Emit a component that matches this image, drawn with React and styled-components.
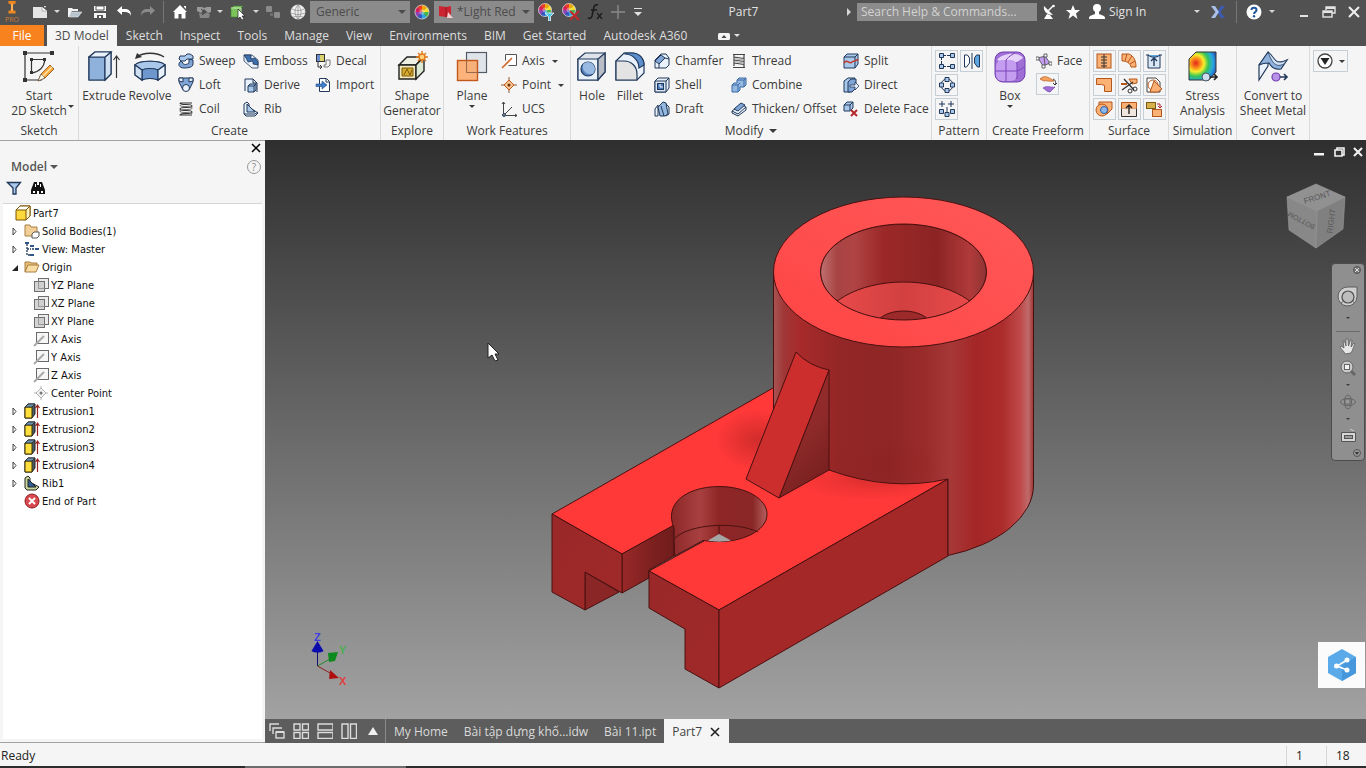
import React from "react";
import styled, { createGlobalStyle, css } from "styled-components";

const UI = '"Open Sans", "Noto Sans", sans-serif';
const TREE = '"DejaVu Sans Condensed", "DejaVu Sans", sans-serif';

const GlobalStyle = createGlobalStyle`
  * { box-sizing: border-box; }
  body { margin: 0; background: #f5f5f5; font-family: ${UI}; font-size: 12px; line-height: 16px; color: #3b3b3b; }
  button, select, input { font: inherit; color: inherit; margin: 0; padding: 0; border: 0; background: none; border-radius: 0; }
  button { cursor: pointer; white-space: nowrap; }
  ul { list-style: none; margin: 0; padding: 0; }
  svg { display: block; flex: none; }
`;

/* ---------- icons ---------- */

const N = "#21385a";
const B = "#a9c8ea";
const W = "#e9f1fa";
const O = "#fbb173";
const OD = "#b5561c";

const Wheel = ({ cx = 8, cy = 8, r = 7 }) => {
  const colors = ["#f6a400", "#f4e02b", "#45b649", "#2fa8dc", "#3256c4", "#9440b8", "#d81e5b", "#ee3b24"];
  return (
    <g>
      {colors.map((c, i) => {
        const a = (i * Math.PI) / 4 - Math.PI / 2;
        const b = a + Math.PI / 4;
        return (
          <path
            key={c}
            fill={c}
            d={`M${cx} ${cy}L${cx + r * Math.cos(a)} ${cy + r * Math.sin(a)}A${r} ${r} 0 0 1 ${cx + r * Math.cos(b)} ${cy + r * Math.sin(b)}Z`}
          />
        );
      })}
      <circle cx={cx} cy={cy} r={r / 2.6} fill="#fff" opacity=".35" />
      <circle cx={cx} cy={cy} r={r} fill="none" stroke="#d8d8d8" strokeWidth=".8" />
    </g>
  );
};

const planeIcon = (
  <g stroke="#6e6e6e" fill="#dcdcdc">
    <rect x="5.500" y="1.500" width="10" height="10" fill="#ececec" />
    <rect x="1.500" y="4.500" width="10" height="10" fill="#c9c9c9" fillOpacity=".8" />
    <path d="M5.500 4.500v7h6" fill="none" stroke="#999" />
  </g>
);
const axisSmall = (
  <g fill="none">
    <rect x="3.500" y="1.500" width="12" height="11" fill="#f6f6f6" stroke="#6a6a6a" />
    <path d="M1 15 11 5" stroke="#a9a9a9" strokeWidth="2" />
  </g>
);

const ICONS = {
  appLogo: [18, <g><path d="M5 0h8v3h-2l-1 2v4l1 2h2v3H5v-3h2l1-2V5L7 3H5z" fill="#f0861e" /><path d="M8 3h2v8H8z" fill="#ffb35c" /></g>],
  newDoc: [16, <g fill="#e6e6e6"><path d="M1 3h9l5 4v7H1z" /><path d="M10 3v4h5" fill="#fff" stroke="#9a9a9a" strokeWidth=".7" /><path d="m11 0 1 2 2 0-1 2" fill="#fff" /></g>],
  open: [16, <g><path d="M1 4h4l1 1h5v2H5l-3 6H1z" fill="#f2f2f2" /><path d="M5 8h10l-4 5H2z" fill="#b8c4ce" stroke="#dfe5ea" strokeWidth=".6" /></g>],
  save: [16, <g><path d="M2 2h12v12H2z" fill="#f4f4f4" /><path d="M4 2h8v4H4z" fill="#fff" stroke="#555" /><path d="M2 7h12v2H2z" fill="#555" /><path d="M5 11h6v3H5z" fill="#555" /><path d="M7 12h2v2H7z" fill="#fff" /></g>],
  undo: [16, <path d="M6 2v3h3c4 0 6 2 6 7-1-3-3-4-6-4H6v3L1 6.500z" fill="#fff" />],
  redo: [16, <path d="M10 2v3H7C3 5 1 7 1 12c1-3 3-4 6-4h3v3l5-4.500z" fill="#8a8a8a" />],
  home: [16, <g><path d="M8 1 1 8h1.500v6.500h4V10h3v4.500h4V8H15z" fill="#fff" /><path d="M12 2h2v3l-2-2z" fill="#fff" /></g>],
  broken: [16, <g fill="#9a9a9a"><path d="M1 3h5l2 1 3-1h4v5l-3 1-4-4-3 4-4-2z" /><path d="M3 9l4 1 2-2 5 2-1 4H4z" fill="#858585" /><path d="M5 5l5 4M6 11l4-3" stroke="#444" /></g>],
  pick: [16, <g><path d="M1 4 4 2h9l-2 2v9H1z" fill="#7cc35e" stroke="#418a2b" strokeWidth=".6" /><path d="M1 4h10v9" fill="none" stroke="#c4e9b4" /><path d="M8 5v10l2-2 2 3 2-1-2-3h3z" fill="#fff" stroke="#222" strokeWidth=".7" /></g>],
  squares: [16, <g fill="#8b8b8b"><rect x="1" y="2" width="6" height="6" rx="1" /><rect x="9" y="8" width="6" height="6" rx="1" /><path d="M5 9h3v3H5z" fill="#6e6e6e" /></g>],
  globe: [16, <g fill="none" stroke="#8a8a8a" strokeWidth=".7"><circle cx="8" cy="8" r="7" fill="#efefef" stroke="#fff" /><path d="M2 5c4 2 8 2 12 0M1 9c5 2 9 2 14 0M3 13c3-1 7-1 10 0M8 1c-4 4-4 10 0 14M8 1c4 4 4 10 0 14M8 1v14" /></g>],
  wheel: [16, <Wheel />],
  wheelFilter: [18, <g><Wheel cx={8} cy={7} r={6.5} /><path d="M8 10h9l-3.500 3.500V18h-2v-4.500z" fill="#4cc3e8" stroke="#fff" strokeWidth=".7" /></g>],
  wheelX: [18, <g><Wheel cx={7} cy={7} r={6.5} /><path d="m8 8 9 9m0-9-9 9" stroke="#c22a2a" strokeWidth="2" /></g>],
  fx: [18, <g fill="none" stroke="#1d1d1d" strokeWidth="1.600"><path d="M12 2c-3-1-4 1-4.500 4L6 13c-.5 2-2 3-4 2M5 7h6" /><path d="m11 10 5 6m0-6-5 6" strokeWidth="1.300" /></g>],
  plus: [16, <path d="M8 1v14M1 8h14" stroke="#8a8a8a" strokeWidth="1.400" />],
  swatch: [16, <g><path d="M1 2 8 3l5-1v10l-5 1-7-1z" fill="#cc2430" /><path d="M8 3v10" stroke="#8f1620" /><path d="m10 8 5 6H9z" fill="#f2d0d2" /></g>],
  satellite: [16, <g><path d="M3 2c-1 5 3 9 9 9L8 7z" fill="#fff" /><path d="m7 7 5-5" stroke="#fff" strokeWidth="1.500" /><circle cx="12.500" cy="2" r="1.300" fill="#fff" /><path d="M6 10 3 15h9l-3-4" fill="#fff" /></g>],
  star: [16, <path d="m8 1 2 5h5l-4 3.500L12.500 15 8 11.500 3.500 15 5 9.500 1 6h5z" fill="#fff" />],
  user: [18, <g fill="#fff"><circle cx="9" cy="5" r="4" /><path d="M7 8h4v3l5 2c1 1 1 2 1 3H1c0-1 0-2 1-3l5-2z" /></g>],
  exchange: [16, <g><path d="M15 2h-4L7 8l4 6h4l-4.500-6z" fill="#3c5cb2" /><path d="M1 2h4l4 6-4 6H1l4.500-6z" fill="#a9c1ea" /></g>],
  help: [16, <g><circle cx="8" cy="8" r="7.500" fill="#fff" /><path d="M5.500 6c0-3 5-3 5 0 0 2-2.500 2-2.500 4" fill="none" stroke="#20569c" strokeWidth="2" /><circle cx="8" cy="12.200" r="1.200" fill="#20569c" /></g>],
  min: [16, <path d="M4 11h8v2H4z" fill="#e4e4e4" />],
  restore: [16, <g fill="none" stroke="#e4e4e4" strokeWidth="1.400"><path d="M5 6V3h9v6h-3" /><path d="M5 4h9" strokeWidth="2" /><rect x="2" y="7" width="9" height="6" /><path d="M2 8h9" strokeWidth="2" /></g>],
  close: [16, <path d="m3 3 10 10M13 3 3 13" stroke="#f0f0f0" strokeWidth="2" />],
  ribbonUp: [14, <g><rect x="1" y="4" width="12" height="7" rx="1.500" fill="#f3f3f3" /><path d="m4.500 9 2.500-3 2.500 3z" fill="#444" /></g>],

  sketch: [32, <g fill="none" stroke="#333" strokeWidth="1.200"><path d="M2 2h27M2 2v27h17M8.500 8.500H22M8.500 8.500v13.500M8.500 22C16 21 21 16 22 8.500" /><g fill="#333" stroke="none"><path d="M0 0h4v4H0zM27 0h4v4h-4zM0 27h4v4H0zM7 7h3v3H7zM20 7h3v3h-3zM7 20h3v3H7z" /></g><path d="m15 30 3-7 9-9 4 4-9 9z" fill="#f6a83a" stroke="#8a4b12" strokeWidth=".8" /><path d="m15 30 3-7 4 4z" fill="#fff3dd" stroke="#555" strokeWidth=".7" /><path d="m20 25 9-9" stroke="#fde7b4" /></g>],
  extrude: [32, <g stroke={N} strokeWidth="1.200"><path d="M1 6 7 1h16v22l-6 6H1z" fill={B} strokeLinejoin="round" /><path d="M1 6h16v23H1z" fill="#8fb2dd" /><path d="m17 6 6-5v22l-6 6z" fill="#cfe0f3" /><path d="M1 6 7 1h16l-6 5z" fill={W} /><path d="M28.500 27V6m-3 3 3-4 3 4" fill="none" stroke="#333" /></g>],
  revolve: [32, <g stroke={N} strokeWidth="1.200"><path d="M1 14c4-5 26-5 30 0v10l-7 5c-4-2-12-2-16 0l-7-5z" fill="#7fa6d6" /><path d="M1 14c4-5 26-5 30 0l-7 5c-4-2-12-2-16 0z" fill={B} /><path d="M8 19c4-2 12-2 16 0v10c-4-2-12-2-16 0z" fill="#6d97cd" /><path d="M1 14l7 5v10l-7-5z" fill="#cfe0f3" /><path d="m31 14-7 5v10l7-5z" fill={W} /><path d="M3 6C9 1 23 1 30 6" fill="none" stroke="#333" strokeWidth="1.500" /><path d="m1 8 2-6 5 4z" fill="#333" stroke="none" /></g>],
  sweep: [16, <g stroke={N}><path d="M3 8c-4 3-2 7 3 7s9-1 9-4V7l-4-1v4c-2 2-6 2-6 0z" fill="#7fa6d6" /><path d="M2 3h5l2-2h3l3 2v3H9l-2 2H3L1 6z" fill={B} /></g>],
  loft: [16, <g stroke={N}><path d="M1 1h14v4l-4 8H5L1 5z" fill="#7fa6d6" /><path d="M1 1h4v4l-4-1zM11 1h4v3l-4 1z" fill={W} /><circle cx="8" cy="11" r="3.500" fill={W} /></g>],
  coil: [16, <g fill="none" stroke="#333" strokeWidth="1.100"><path d="M2 2h12M2 2c0 3 12 0 12 3s-12 0-12 3 12 0 12 3-12 0-12 3h12" /><path d="M2 4c0 3 12 0 12 3s-12 0-12 3 12 0 12 3" stroke="#777" /></g>],
  emboss: [16, <g stroke={N} strokeWidth=".8"><path d="M1 2h8l6 5v8H9L1 8z" fill={W} /><path d="M1 2h7v4l4-1 3 4v3l-5-1V8L5 9 3 5z" fill="#3d6fae" /></g>],
  derive: [16, <g stroke={N} fill="none"><path d="M2 14V2h8l4 4v9" fill={W} /><path d="M10 2v4h4" /><path d="M5 9 7 7h6v6l-2 2H5z" fill={B} /><path d="M5 9h6v6m0-6 2-2" /></g>],
  rib: [16, <g stroke={N}><path d="M1 3 4 1l2 2v3l9 6-3 3H3l-2-2z" fill={W} /><path d="M4 3v8h8z" fill={B} /><path d="M1 13h11l3-2" fill="none" /></g>],
  decal: [16, <g stroke="#333"><rect x="1.500" y="1.500" width="8" height="7" fill="#d9d26c" /><path d="M2 8V2h3v6z" fill="#6a8fd0" stroke="none" /><path d="M3 9v5h4m-2-2 2 2-2 2" fill="none" /><path d="M9 14h4l2-2V7h-4v5H9z" fill="#f4f4f4" stroke="#777" /></g>],
  import: [16, <g><path d="M4.500 1.500h7l3 3v10h-10z" fill="#fff" stroke={N} /><path d="M11 2v3h3" stroke={N} fill="none" /><path d="M1 7h6V4l5 4-5 4V9.500H1z" fill="#3f7fc9" stroke="#1f4a86" strokeWidth=".6" /></g>],
  shape: [32, <g stroke="#222" strokeWidth="1.400"><path d="M3 14 11 6h16l-7 8z" fill="#eef0e4" /><path d="M3 14h17v14H3z" fill="#f2e9b8" /><path d="m20 14 8-8v14l-8 8z" fill="#dcead4" /><path d="M6 17h11v8H6z" fill="#d8ac2c" stroke="#7d5a12" strokeWidth="1" /><path d="m8 24 3-6 3 6 2-5" fill="none" stroke="#7d5a12" strokeWidth="1" /><path d="M26 0v12M20 6h12M22 2l8 8M30 2l-8 8" stroke="#e07a1c" /><circle cx="26" cy="6" r="3" fill="#ffd27a" stroke="#e07a1c" /></g>],
  plane: [32, <g><rect x="10.500" y="1.500" width="20" height="20" fill="#dfe3ea" stroke="#555b66" strokeWidth="1.200" /><rect x="1.500" y="9.500" width="20" height="20" fill="#fba765" fillOpacity=".85" stroke="#c2581b" strokeWidth="1.400" /><path d="M10.500 9.500v12h11" fill="none" stroke="#9a6a4a" /></g>],
  axis: [16, <g fill="none"><path d="M4.500 1.500h11v11h-8M4.500 1.500v6" fill="#fff" stroke="#555" /><path d="M1 15 11 5" stroke="#d5692a" strokeWidth="1.600" /></g>],
  point: [16, <g fill="none" stroke="#c2581b"><path d="M8 0v16M0 8h16" stroke="#8c5a34" /><path d="m8 3 5 5-5 5-5-5z" fill="#fbc18f" /><circle cx="8" cy="8" r="1.500" fill="#6a3413" stroke="none" /></g>],
  ucs: [16, <g fill="none" stroke="#444"><path d="M2.500 1v13.500H16M3 14l8-8M1 3l1.500-2L4 3M14 13l2 1.500-2 1.500" /><circle cx="3" cy="14" r="1.500" fill="#5b8fc9" /></g>],
  hole: [32, <g stroke={N} strokeWidth="1.200"><path d="M2 8 9 2h20v19l-7 8H2z" fill="#dfe4ea" /><path d="M2 8h20v21H2z" fill={W} /><path d="m22 8 7-6v19l-7 8z" fill="#b9bec6" /><circle cx="12" cy="18" r="7" fill="#5684c3" /><path d="M7 13a7 7 0 1 1 10 10C9 24 6 19 7 13z" fill="#a9c8ea" stroke="none" opacity=".8" /></g>],
  fillet: [32, <g stroke={N} strokeWidth="1.200"><path d="M2 10 10 2h8c7 0 12 6 12 12v8l-7 7H2z" fill={W} /><path d="M11 3c8 0 14 7 14 14l5-3C30 7 25 2 18 2h-7z" fill="#5e8fcd" /><path d="M2 10h8c7 0 13 5 13 13v6H2z" fill="#e3e3e3" /></g>],
  chamfer: [16, <g stroke={N}><path d="M1 7 7 1h5l3 4v7l-3 3H1z" fill={W} /><path d="m1 8 6-6 4 3-6 6z" fill="#7fa6d6" /><path d="M5 11v4M11 5l4 1" fill="none" /></g>],
  shell: [16, <g stroke={N}><path d="M1 4 4 1h11v10l-3 4H1z" fill={W} /><path d="M1 4h11v11H1z" fill="#dce8f5" /><rect x="3.500" y="6.500" width="6" height="6" fill="#4a7cc0" /><path d="M6 7v3h3" stroke="#fff" fill="none" /><path d="m12 4 3-3" /></g>],
  draft: [16, <g stroke={N}><path d="M1 8 4 4v11H1zM12 3l3 3v7l-3 2z" fill={W} /><path d="m4 6 5-5 3 1 2 11-3 2H6z" fill="#94b8e0" /><path d="m7 5 3 10" fill="none" /></g>],
  thread: [16, <g stroke="#444" fill="none" strokeWidth="1.200"><path d="M2 1.500h12M3 4l10 1.500M3 7l10 1.500M3 10l10 1.500M2 14.500h12M3 2v11M13 2v12" /><path d="m3 5.500 10 1.500M3 8.500 13 10" stroke="#aaa" /></g>],
  combine: [16, <g stroke="#3b6aa5"><path d="M6 3 8 1h7v7l-2 2H9v3l-2 2H1V8l2-2h3z" fill="#94b8e0" /><path d="M1 8h6v7M7 8l2-2M6 3h7v7m0-7 2-2" fill="none" /></g>],
  thicken: [16, <g stroke={N}><path d="m1 10 9-7 5 3v3l-8 6-6-3z" fill={W} /><path d="m1 10 6 3 8-7" fill="none" /><path d="m3 8 7-6 4 2-7 6z" fill="#7fa6d6" /></g>],
  split: [16, <g stroke={N}><path d="M1 4 4 1h11v10l-3 4H1z" fill={B} /><path d="M1 4h11v11M12 4l3-3" fill="none" /><path d="M1 10c3-5 5 2 8-1 2-2 4 0 6-3" fill="none" stroke="#c0392b" strokeWidth="1.500" /></g>],
  direct: [16, <g stroke={N}><path d="M1 4 5 1h7l-3 3v10l-2 1H1z" fill={B} /><path d="M5 5 8 2h5v9l-4 4H5z" fill="#7fa6d6" /><path d="M7 8h5V5l4 4-4 4v-3H7z" fill="#e8f1fb" strokeWidth=".8" /></g>],
  deleteFace: [16, <g><path d="M1 4 4 1h6v6l-3 3H1z" fill={B} stroke={N} /><path d="M1 4h6v6m0-6 3-3" fill="none" stroke={N} /><path d="m8 9 6 6m0-6-6 6" stroke="#b7282c" strokeWidth="2" /></g>],
  patRect: [18, <g fill={B} stroke={N}><path d="M5 3.500h8M3.500 5v9M5 14.500h8" strokeDasharray="3 1" /><path d="M1.500 1.500h4v4h-4zM12.500 1.500h4v4h-4zM1.500 12.500h4v4h-4zM12.500 12.500h4v4h-4z" /></g>],
  patMirror: [18, <g stroke={N}><path d="M1.500 3v12h2l3-4V6l-2-3z" fill="#fff" /><path d="M9 1v16" /><path d="M16.500 3v12h-2l-3-4V6l2-3z" fill="#5da5df" /></g>],
  patCirc: [18, <g fill={B} stroke={N}><circle cx="9" cy="9" r="6" fill="none" /><path d="M7 1.500h4v4H7zM1.500 7h4v4h-4zM12.500 7h4v4h-4zM7 12.500h4v4H7z" /></g>],
  patSketch: [18, <g fill={B} stroke={N}><path d="M4 1v6M1 4h6M13 1v6M10 4h6M9 7v6" /><path d="M1.500 9.500h4v4h-4zM7 12.500h4v4H7zM12.500 9.500h4v4h-4z" /></g>],
  box: [32, <g><rect x="1" y="1" width="30" height="30" rx="8" fill="#a06fd6" stroke="#6f3fae" /><path d="M3 9c4-7 22-9 26-2l-6 4H9z" fill="#e6d3fa" /><rect x="2" y="9" width="21" height="21" rx="6" fill="#c49cf0" /><path d="M12 9v21M2 20h21c3-1 6-3 8-5M12 9c3-4 7-6 9-7M23 11v17" fill="none" stroke="#7a46bb" /></g>],
  face: [16, <g stroke="#444" strokeWidth=".8"><path d="m2 5 7-2 5 7-7 3z" fill="#c49cf0" /><path d="M0 4h3v3H0zM8 1h3v3H8zM13 9h3v3h-3zM6 12h3v3H6z" fill="#fff" /><path d="m8 4 1 8" /></g>],
  convertFree: [18, <g><path d="M1 4c4-4 8-2 11 0l3 2c-4 1-8-1-10 0z" fill="#f6a25c" stroke="#b5561c" strokeWidth=".7" /><path d="M4 13c4-3 8 0 12-1l-5 5c-3 0-5-3-7-4z" fill="#a06fd6" stroke="#6f3fae" strokeWidth=".7" /><path d="M14 4c3 1 3 4 2 6m-2-2 2 2 2-2" fill="none" stroke="#333" /></g>],
  stitch: [18, <g stroke={OD}><rect x="2" y="2" width="14" height="14" fill={O} /><path d="M9 2v14M6 5h6M6 8h6M6 11h6M6 14h6" stroke="#333" /></g>],
  patch: [18, <g stroke={OD}><path d="M2 2h7c5 2 7 7 7 13h-5c-1-4-4-6-9-6z" fill={O} /><path d="M7 2 5 9M12 4l-4 6M15 9l-5 3" fill="none" /></g>],
  sculpt: [18, <g stroke={N}><path d="M3 3v13h12V3M1 3h3M14 3h3" fill="#dbe9f7" /><path d="M3 3c4 3 8 3 12 0" fill="#5ea6dc" /><path d="M9 14V6m-3 3 3-3 3 3" fill="none" strokeWidth="1.400" /></g>],
  surfPatch: [18, <path d="M1.500 2.500h15v13h-7v-6l-3-1h-5z" fill={O} stroke={OD} />],
  trim: [18, <g><path d="M9 3h8v4l-5 1z" fill={O} stroke={OD} /><path d="M1 8h6" stroke={OD} strokeWidth="2" /><path d="M4 3 14 14M2 14 13 6" stroke="#333" strokeWidth="1.300" /><circle cx="15" cy="13" r="2" fill="none" stroke="#333" /><circle cx="10" cy="15" r="2" fill="none" stroke="#333" /></g>],
  extend: [18, <g><path d="M2 2h9l4 4v10H2z" fill="#fff" stroke="#444" /><circle cx="8" cy="9" r="5" fill="none" stroke={OD} /><path d="m9 5 8 8-4 3H5z" fill={O} stroke={OD} /></g>],
  replace: [18, <g><path d="M4 2h13v7l-5 5H4z" fill={O} stroke={OD} /><circle cx="7" cy="10" r="6" fill={O} stroke={OD} /><circle cx="9" cy="10" r="3.500" fill="#8ab8ea" stroke="#2d5fa8" /></g>],
  thickSurf: [18, <g><path d="M1.500 2.500h15v6h-15z" fill={O} stroke={OD} /><path d="M1.500 8.500v8h15v-8" fill="#f1e6dd" stroke="#333" /><path d="M9 14V5m-3 3 3-3 3 3" fill="none" stroke="#222" strokeWidth="1.400" /></g>],
  copyObj: [18, <g><rect x="1.500" y="2.500" width="9" height="6" fill="#d6b04c" stroke="#7d5a12" /><rect x="7.500" y="9.500" width="9" height="7" fill={O} stroke={OD} /><path d="M12 4h3v4m-2-2 2 2 2-2" fill="none" stroke="#b7282c" /></g>],
  funnelDrop: [16, <g><circle cx="8" cy="8" r="7" fill="#fff" stroke="#444" strokeWidth="1.300" /><path d="M3.500 5h9L8 12z" fill="#222" /></g>],
  sheet: [32, <g stroke={N} strokeWidth="1.200"><path d="m2 14 9-12v13L2 29z" fill={W} /><path d="M2 14 11 1c3 2 5 6 8 9 3 2 7 1 11-1l-6 9c-5 1-9-1-12-6-3 0-6 0-10 2z" fill="#8fb2dd" /><path d="M11 1c3 2 5 6 8 9 3 2 7 1 11-1l-3 4c-8 4-12-1-16-12z" fill="#cfe0f3" strokeWidth=".8" /><circle cx="19" cy="26" r="4" fill="#b893e6" stroke="#6f3fae" /><path d="M23 26h7m-3-3 3 3-3 3" fill="none" strokeWidth="1.600" /></g>],

  filter: [16, <path d="M1.500 2.500h13L10 8v6H7V8z" fill="#a9c8ea" stroke={N} strokeWidth="1.300" />],
  binoc: [16, <g fill="#111"><path d="M4 2h3v3h2V2h3l3 8v4H9v-3H7v3H1v-4z" /><path d="M3 11h2v2H3zM11 11h2v2h-2zM5 4h1v3H5zM10 4h1v3h-1z" fill="#fff" /></g>],
  partCube: [16, <g stroke="#7c5400"><path d="M1 5 5 1h10v10l-4 4H1z" fill="#ffd83b" /><path d="M1 5 5 1h10l-4 4z" fill="#fff" /><path d="m11 5 4-4v10l-4 4z" fill="#fdf1c0" /></g>],
  bodies: [16, <g><path d="M1 2h5l1 2h6v9H1z" fill="#f2cf97" stroke="#a97f43" /><path d="M8 11 10 9h5v4l-2 2H8z" fill="#fff" stroke="#555" /></g>],
  view: [16, <g stroke={N} fill="none"><path d="M3 3v11h3M3 8h4M8 8h3" strokeDasharray="2 1" strokeWidth="1.300" /><path d="M1 1h4v2H1zM6 4h4v2H6zM11 7h4v2h-4zM6 13h4v2H6z" fill="#2e5688" stroke="none" /></g>],
  folder: [16, <g stroke="#a97f43"><path d="M1 13V3h5l1 1h6v3" fill="#e8bd74" /><path d="m1 13 3-7h11l-3 7z" fill="#f8dca4" /></g>],
  wplane: [16, planeIcon],
  waxis: [16, axisSmall],
  wpoint: [16, <g fill="none" stroke="#b4b4b4"><path d="M8 1v14M1 8h14" /><path d="m8 3 5 5-5 5-5-5z" fill="#f2f2f2" /><circle cx="8" cy="8" r="1.500" fill="#777" stroke="none" /></g>],
  extrusion: [16, <g><path d="M1 4 4 1h7v10l-3 4H1z" fill="#4a5a68" stroke="#222" /><path d="M1 4h7v11H1z" fill="#ffdf3d" stroke="#3d3200" /><path d="M4 1h7L8 4H1z" fill="#6d93b5" stroke="#222" strokeWidth=".8" /><path d="M13.500 15V2m-2 3 2-3 2 3" fill="none" stroke="#9b2020" strokeWidth="1.200" /></g>],
  ribTree: [16, <g stroke="#222"><path d="M1 3 4 1l2 2v4l9 5-3 3H3l-2-2z" fill="#c9d69a" /><path d="M4 4v8h8z" fill="#2f5f92" /></g>],
  endPart: [16, <g><circle cx="8" cy="8" r="7" fill="#d94a4e" stroke="#8f1d22" /><path d="m5 5 6 6m0-6-6 6" stroke="#fff" strokeWidth="2" /></g>],

  cascade: [16, <g fill="none" stroke="#dcdcdc" strokeWidth="1.400"><path d="M1 8V1h9M4 11V5h9" /><rect x="7" y="9" width="8" height="6" /><path d="M7 9h8" strokeWidth="2" /></g>],
  tile: [16, <g fill="none" stroke="#dcdcdc" strokeWidth="1.400"><path d="M1 1h6v6H1zM9.500 1h6v6h-6zM1 9.500h6v6H1zM9.500 9.500h6v6h-6z" /></g>],
  hsplit: [16, <g fill="none" stroke="#dcdcdc" strokeWidth="1.400"><path d="M1 1h15v6H1zM1 9.500h15v6H1z" /></g>],
  vsplit: [16, <g fill="none" stroke="#dcdcdc" strokeWidth="1.400"><path d="M1 1h6v14.500H1zM9.500 1h6v14.500h-6z" /></g>],
  upTri: [16, <path d="m8 4 5 8H3z" fill="#f0f0f0" />],
  tabX: [12, <path d="m2 2 8 8m0-8-8 8" stroke="#222" strokeWidth="1.600" />],

  navWheel: [24, <g><path d="M12 2h9v10a9.500 9.500 0 1 1-9-10z" fill="#cfcfcf" stroke="#5c5c5c" /><circle cx="12" cy="12" r="6" fill="#bdbdbd" stroke="#4d4d4d" strokeWidth="1.200" /><path d="m5 18 3-2M19 18l-3-2" stroke="#666" /></g>],
  hand: [18, <path d="M6 17c-1-3-4-5-5-7l1-1 3 2-1-7 1.500 0 1.500 5 0-7H9l.5 7 2-6h1.500l-1 7 3-4 1 1c-2 3-2 6-4 9z" fill="#e6e6e6" stroke="#5a5a5a" strokeWidth=".8" />],
  zoomNav: [18, <g><path d="m11 11 5 5" stroke="#666" strokeWidth="3" /><circle cx="8" cy="8" r="6" fill="#c9c9c9" stroke="#666" /><rect x="5.500" y="5.500" width="5" height="5" fill="#f2f2f2" stroke="#666" /></g>],
  orbit: [18, <g fill="none" stroke="#666"><ellipse cx="9" cy="9" rx="7.500" ry="3.500" /><ellipse cx="9" cy="9" rx="3.500" ry="7" /><path d="M6 6h5v5H6z" fill="#9a9a9a" /></g>],
  look: [18, <g><path d="M2.500 5.500h14v9h-14z" fill="#d6d6d6" stroke="#555" /><rect x="5.500" y="8.500" width="8" height="3" fill="#999" stroke="#555" /><path d="m11 2 4 2" stroke="#ccc" /></g>],
};

const Icon = ({ name, size }) => {
  const [box, art] = ICONS[name];
  return (
    <svg width={size || box} height={size || box} viewBox={`0 0 ${box} ${box}`} aria-hidden="true">
      {art}
    </svg>
  );
};

const StressIcon = () => (
  <svg width="32" height="32" viewBox="0 0 32 32" aria-hidden="true">
    <defs>
      <radialGradient id="stress" cx=".25" cy=".4" r=".85">
        <stop offset="0" stopColor="#e3261c" />
        <stop offset=".2" stopColor="#f98a1a" />
        <stop offset=".36" stopColor="#f8ee2c" />
        <stop offset=".55" stopColor="#35c558" />
        <stop offset=".75" stopColor="#25a8e0" />
        <stop offset="1" stopColor="#2b3fae" />
      </radialGradient>
    </defs>
    <path d="M2 8 9 1h20v20l-7 8H2z" fill="url(#stress)" stroke="#333" />
    <circle cx="19" cy="26" r="4" fill="#cddcf0" stroke="#456" />
    <path d="M23 26h7m-3-3 3 3-3 3" fill="none" stroke="#222" strokeWidth="1.600" />
  </svg>
);

/* ---------- shared parts ---------- */

const Caret = styled.span`
  flex: none;
  width: 0;
  height: 0;
  border: ${(p) => p.$s || 3}px solid transparent;
  border-bottom: 0;
  border-top-color: ${(p) => p.$c || "#3b3b3b"};
`;

const CaretRight = styled.span`
  width: 0;
  height: 0;
  border: 4px solid transparent;
  border-right: 0;
  border-left-color: #d6d6d6;
`;

/* ---------- title bar ---------- */

const Shell = styled.div`
  display: flex;
  flex-direction: column;
  min-height: 100vh;
`;

const TitleBar = styled.header`
  display: flex;
  align-items: center;
  height: 25px;
  padding-bottom: 2px;
  background: #515151;
  color: #e2e2e2;
`;

const BarButton = styled.button`
  display: flex;
  align-items: center;
  justify-content: center;
  flex: none;
  width: ${(p) => p.$w || 24}px;
  height: 22px;
`;

const AppButton = styled(BarButton)`
  flex-direction: column;
  margin-right: 3px;
  color: #c97b33;
  font-size: 7px;
  line-height: 6px;
`;

const BarRule = styled.span`
  flex: none;
  width: 1px;
  height: 22px;
  margin: 0 ${(p) => p.$m || 3}px;
  background: #777;
`;

const Combo = styled.label`
  display: flex;
  align-items: center;
  gap: 3px;
  flex: none;
  width: 100px;
  height: 22px;
  padding: 0 4px;
  background: #8b8b8b;
  color: #4c4c4c;
  select {
    flex: 1;
    min-width: 0;
    appearance: none;
    opacity: 1;
    padding-left: 2px;
  }
  svg + select { padding-left: 0; }
`;

const DocTitle = styled.h1`
  flex: 1;
  margin: 0;
  text-align: center;
  font-size: 12px;
  font-weight: 400;
`;

const Search = styled.input`
  flex: none;
  width: 180px;
  height: 18px;
  padding: 0 4px;
  background: #8c8c8c;
  color: #fff;
  &::placeholder { color: #d2d2d2; opacity: 1; }
`;

const SignIn = styled.button`
  display: flex;
  align-items: center;
  gap: 3px;
  flex: none;
  width: 106px;
  padding-left: 3px;
`;

const WindowButtons = styled.div`
  display: flex;
  margin-left: 16px;
`;

const Title = () => (
  <TitleBar>
    <AppButton aria-label="Application menu">
      <Icon name="appLogo" size={16} />
      PRO
    </AppButton>
    <BarButton $w={26} aria-label="New"><Icon name="newDoc" /></BarButton>
    <BarButton $w={8} aria-label="New options"><Caret $c="#d6d6d6" /></BarButton>
    <BarButton $w={28} aria-label="Open"><Icon name="open" /></BarButton>
    <BarButton $w={22} aria-label="Save"><Icon name="save" /></BarButton>
    <BarButton $w={26} aria-label="Undo"><Icon name="undo" /></BarButton>
    <BarButton $w={22} aria-label="Redo"><Icon name="redo" /></BarButton>
    <BarRule $m={4} />
    <BarButton aria-label="Home"><Icon name="home" /></BarButton>
    <BarButton aria-label="Update"><Icon name="broken" /></BarButton>
    <BarButton $w={8} aria-label="Update options"><Caret $c="#d6d6d6" /></BarButton>
    <BarButton $w={28} aria-label="Select"><Icon name="pick" /></BarButton>
    <BarButton $w={8} aria-label="Select options"><Caret $c="#d6d6d6" /></BarButton>
    <BarButton $w={26} aria-label="Team"><Icon name="squares" /></BarButton>
    <BarButton aria-label="Material browser"><Icon name="globe" /></BarButton>
    <Combo>
      <select aria-label="Material"><option>Generic</option></select>
      <Caret $s={4} $c="#4c4c4c" />
    </Combo>
    <BarButton aria-label="Appearance browser"><Icon name="wheel" /></BarButton>
    <Combo>
      <Icon name="swatch" />
      <select aria-label="Appearance"><option>*Light Red</option></select>
      <Caret $s={4} $c="#4c4c4c" />
    </Combo>
    <BarButton aria-label="Adjust"><Icon name="wheelFilter" /></BarButton>
    <BarButton $w={26} aria-label="Clear appearance"><Icon name="wheelX" /></BarButton>
    <BarButton $w={22} aria-label="Parameters"><Icon name="fx" /></BarButton>
    <BarButton aria-label="Measure"><Icon name="plus" /></BarButton>
    <BarButton $w={16} aria-label="Customize toolbar">
      <svg width="10" height="8" viewBox="0 0 10 8"><path d="M1 0h8v1H1zM1 4h8L5 8z" fill="#e2e2e2" /></svg>
    </BarButton>
    <DocTitle>Part7</DocTitle>
    <BarButton $w={16} aria-label="Expand search"><CaretRight /></BarButton>
    <Search type="search" placeholder="Search Help &amp; Commands..." aria-label="Search Help and Commands" />
    <BarButton aria-label="Communication center"><Icon name="satellite" /></BarButton>
    <BarButton aria-label="Favorites"><Icon name="star" /></BarButton>
    <SignIn><Icon name="user" />Sign In</SignIn>
    <BarButton $w={12} aria-label="Account options"><Caret $c="#d6d6d6" /></BarButton>
    <BarButton $w={30} aria-label="Exchange apps"><Icon name="exchange" /></BarButton>
    <BarRule />
    <BarButton $w={28} aria-label="Help"><Icon name="help" /></BarButton>
    <BarButton $w={8} aria-label="Help options"><Caret $c="#d6d6d6" /></BarButton>
    <WindowButtons>
      <BarButton aria-label="Minimize"><Icon name="min" /></BarButton>
      <BarButton $w={26} aria-label="Restore"><Icon name="restore" /></BarButton>
      <BarButton aria-label="Close"><Icon name="close" /></BarButton>
    </WindowButtons>
  </TitleBar>
);

/* ---------- ribbon ---------- */

const TabBar = styled.nav`
  display: flex;
  height: 21px;
  background: #515151;
  color: #dedede;
`;

const Tab = styled.button`
  padding: 1px 8px 0 9px;
  ${(p) => p.$file && css`width: 44px; padding: 1px 0 0; margin-right: 3px; background: #f8821e; color: #fff;`}
  ${(p) => p.$active && css`padding: 1px 8px 0; background: #f5f5f5; color: #4a4a4a;`}
`;

const CollapseButton = styled.button`
  display: flex;
  align-items: center;
  gap: 3px;
  margin-left: 22px;
`;

const Ribbon = styled.div`
  display: flex;
  height: 94px;
  background: #f5f5f5;
`;

const Panel = styled.section`
  display: flex;
  flex-direction: column;
  flex: none;
  width: ${(p) => p.$w}px;
  padding-top: 3px;
  border-right: 1px solid #dadada;
`;

const PanelBody = styled.div`
  display: flex;
  justify-content: ${(p) => (p.$center ? "center" : "flex-start")};
  height: 72px;
  padding-left: ${(p) => p.$pad || 0}px;
`;

const PanelTitle = styled.h2`
  display: flex;
  align-items: center;
  justify-content: center;
  gap: 6px;
  margin: 0;
  padding-top: 2px;
  font-size: 12px;
  font-weight: 400;
  white-space: nowrap;
`;

const Big = styled.button`
  display: flex;
  flex-direction: column;
  align-items: center;
  flex: none;
  width: ${(p) => p.$w}px;
  padding-top: 2px;
  line-height: 15px;
  svg { margin-bottom: 5px; }
  ${Caret} { margin-top: 2px; }
`;

const WithCaret = styled.span`
  display: flex;
  align-items: flex-start;
  gap: 1px;
  padding-left: 7px;
`;

const Column = styled.div`
  display: flex;
  flex-direction: column;
  flex: none;
  width: ${(p) => p.$w}px;
`;

const Small = styled.button`
  display: flex;
  align-items: center;
  gap: 5px;
  height: 24px;
  ${Caret} { margin-left: 2px; }
`;

const ToolGrid = styled.div`
  display: grid;
  grid-template-columns: repeat(${(p) => p.$cols}, 23px);
  grid-auto-rows: 22px;
  gap: 2px;
  padding-top: 1px;
`;

const Tool = styled.button`
  display: flex;
  align-items: center;
  justify-content: center;
  gap: 6px;
  width: ${(p) => (p.$wide ? 35 : 23)}px;
  height: 22px;
  border: 1px solid #c6cfd6;
`;

const Cmd = ({ icon, children, caret }) => (
  <Small>
    <Icon name={icon} />
    {children}
    {caret && <Caret />}
  </Small>
);

const SURFACE_TOOLS = [
  ["stitch", "Stitch"],
  ["patch", "Ruled surface"],
  ["sculpt", "Sculpt"],
  ["surfPatch", "Patch"],
  ["trim", "Trim"],
  ["extend", "Extend"],
  ["replace", "Replace face"],
  ["thickSurf", "Repair bodies"],
  ["copyObj", "Fit mesh"],
];

const RibbonTabs = () => (
  <TabBar>
    <Tab $file>File</Tab>
    <Tab $active>3D Model</Tab>
    {["Sketch", "Inspect", "Tools", "Manage", "View", "Environments", "BIM", "Get Started", "Autodesk A360"].map((t) => (
      <Tab key={t}>{t}</Tab>
    ))}
    <CollapseButton aria-label="Minimize ribbon">
      <Icon name="ribbonUp" />
      <Caret $c="#e2e2e2" />
    </CollapseButton>
  </TabBar>
);

const RibbonPanels = () => (
  <Ribbon>
    <Panel $w={79}>
      <PanelBody $center>
        <Big $w={76}>
          <Icon name="sketch" />
          <span>Start</span>
          <WithCaret>2D Sketch<Caret /></WithCaret>
        </Big>
      </PanelBody>
      <PanelTitle>Sketch</PanelTitle>
    </Panel>
    <Panel $w={302}>
      <PanelBody $pad={2}>
        <Big $w={46}><Icon name="extrude" />Extrude</Big>
        <Big $w={46}><Icon name="revolve" />Revolve</Big>
        <Column $w={5} />
        <Column $w={65}>
          <Cmd icon="sweep">Sweep</Cmd>
          <Cmd icon="loft">Loft</Cmd>
          <Cmd icon="coil">Coil</Cmd>
        </Column>
        <Column $w={72}>
          <Cmd icon="emboss">Emboss</Cmd>
          <Cmd icon="derive">Derive</Cmd>
          <Cmd icon="rib">Rib</Cmd>
        </Column>
        <Column $w={60}>
          <Cmd icon="decal">Decal</Cmd>
          <Cmd icon="import">Import</Cmd>
        </Column>
      </PanelBody>
      <PanelTitle>Create</PanelTitle>
    </Panel>
    <Panel $w={63}>
      <PanelBody $center>
        <Big $w={60}><Icon name="shape" /><span>Shape</span><span>Generator</span></Big>
      </PanelBody>
      <PanelTitle>Explore</PanelTitle>
    </Panel>
    <Panel $w={127}>
      <PanelBody $pad={5}>
        <Big $w={46}><Icon name="plane" />Plane<Caret /></Big>
        <Column $w={6} />
        <Column $w={66}>
          <Cmd icon="axis" caret>Axis</Cmd>
          <Cmd icon="point" caret>Point</Cmd>
          <Cmd icon="ucs">UCS</Cmd>
        </Column>
      </PanelBody>
      <PanelTitle>Work Features</PanelTitle>
    </Panel>
    <Panel $w={361}>
      <PanelBody $pad={2}>
        <Big $w={38}><Icon name="hole" />Hole</Big>
        <Big $w={38}><Icon name="fillet" />Fillet</Big>
        <Column $w={5} />
        <Column $w={77}>
          <Cmd icon="chamfer">Chamfer</Cmd>
          <Cmd icon="shell">Shell</Cmd>
          <Cmd icon="draft">Draft</Cmd>
        </Column>
        <Column $w={112}>
          <Cmd icon="thread">Thread</Cmd>
          <Cmd icon="combine">Combine</Cmd>
          <Cmd icon="thicken">Thicken/ Offset</Cmd>
        </Column>
        <Column $w={84}>
          <Cmd icon="split">Split</Cmd>
          <Cmd icon="direct">Direct</Cmd>
          <Cmd icon="deleteFace">Delete Face</Cmd>
        </Column>
      </PanelBody>
      <PanelTitle>Modify<Caret $s={4} /></PanelTitle>
    </Panel>
    <Panel $w={55}>
      <PanelBody $center>
        <ToolGrid $cols={2}>
          <Tool aria-label="Rectangular pattern"><Icon name="patRect" /></Tool>
          <Tool aria-label="Mirror"><Icon name="patMirror" /></Tool>
          <Tool aria-label="Circular pattern"><Icon name="patCirc" /></Tool>
          <span />
          <Tool aria-label="Sketch driven pattern"><Icon name="patSketch" /></Tool>
        </ToolGrid>
      </PanelBody>
      <PanelTitle>Pattern</PanelTitle>
    </Panel>
    <Panel $w={103}>
      <PanelBody $pad={2}>
        <Big $w={42}><Icon name="box" />Box<Caret /></Big>
        <Column $w={5} />
        <Column $w={50}>
          <Cmd icon="face">Face</Cmd>
          <Tool aria-label="Convert to freeform"><Icon name="convertFree" /></Tool>
        </Column>
      </PanelBody>
      <PanelTitle>Create Freeform</PanelTitle>
    </Panel>
    <Panel $w={79}>
      <PanelBody $center>
        <ToolGrid $cols={3}>
          {SURFACE_TOOLS.map(([icon, label]) => (
            <Tool key={icon} aria-label={label}><Icon name={icon} /></Tool>
          ))}
        </ToolGrid>
      </PanelBody>
      <PanelTitle>Surface</PanelTitle>
    </Panel>
    <Panel $w={68}>
      <PanelBody $center>
        <Big $w={60}><StressIcon /><span>Stress</span><span>Analysis</span></Big>
      </PanelBody>
      <PanelTitle>Simulation</PanelTitle>
    </Panel>
    <Panel $w={73}>
      <PanelBody $center>
        <Big $w={70}><Icon name="sheet" /><span>Convert to</span><span>Sheet Metal</span></Big>
      </PanelBody>
      <PanelTitle>Convert</PanelTitle>
    </Panel>
    <RibbonEnd>
      <Tool $wide aria-label="Show panels"><Icon name="funnelDrop" /><Caret /></Tool>
    </RibbonEnd>
  </Ribbon>
);

const RibbonEnd = styled.div`
  padding: 4px 0 0 3px;
`;

/* ---------- model browser ---------- */

const Main = styled.main`
  display: flex;
  flex: 1;
`;

const Browser = styled.aside`
  display: flex;
  flex-direction: column;
  flex: none;
  width: 265px;
  border-top: 1px solid #a3a3a3;
  border-bottom: 1px solid #a3a3a3;
  background: #f5f5f5;
`;

const BrowserTop = styled.div`
  display: flex;
  justify-content: flex-end;
  height: 14px;
  padding-right: 4px;
`;

const BrowserHead = styled.div`
  display: flex;
  align-items: center;
  justify-content: space-between;
  height: 23px;
  padding: 0 4px 0 11px;
`;

const ModelMenu = styled.button`
  display: flex;
  align-items: center;
  gap: 3px;
  color: #555;
  font-weight: 600;
`;

const HelpRound = styled.button`
  width: 14px;
  height: 14px;
  border: 1px solid #999;
  border-radius: 50%;
  color: #888;
  font-size: 10px;
  line-height: 12px;
`;

const BrowserTools = styled.div`
  display: flex;
  align-items: flex-start;
  gap: 8px;
  height: 25px;
  padding: 2px 0 0 6px;
`;

const Tree = styled.ul`
  flex: 1;
  margin: 0 3px 3px;
  border-top: 1px solid #d5d5d5;
  background: #fff;
  color: #111;
  font-family: ${TREE};
  font-size: 11px;
`;

const Node = styled.li`
  display: flex;
  align-items: center;
  gap: 2px;
  height: 18px;
  padding-left: ${(p) => [6, 6, 30][p.$level]}px;
`;

const Twisty = styled.button`
  flex: none;
  width: ${(p) => (p.$root ? 4 : 13)}px;
  height: 12px;
`;

const NodeLabel = styled.span`
  padding-top: 1px;
`;

const NODES = [
  [0, "partCube", "Part7"],
  [1, "bodies", "Solid Bodies(1)", "closed"],
  [1, "view", "View: Master", "closed"],
  [1, "folder", "Origin", "open"],
  [2, "wplane", "YZ Plane"],
  [2, "wplane", "XZ Plane"],
  [2, "wplane", "XY Plane"],
  [2, "waxis", "X Axis"],
  [2, "waxis", "Y Axis"],
  [2, "waxis", "Z Axis"],
  [2, "wpoint", "Center Point"],
  [1, "extrusion", "Extrusion1", "closed"],
  [1, "extrusion", "Extrusion2", "closed"],
  [1, "extrusion", "Extrusion3", "closed"],
  [1, "extrusion", "Extrusion4", "closed"],
  [1, "ribTree", "Rib1", "closed"],
  [1, "endPart", "End of Part", "none"],
];

const ModelBrowser = () => (
  <Browser>
    <BrowserTop>
      <button aria-label="Close browser">
        <svg width="10" height="10" viewBox="0 0 10 10"><path d="m1 1 8 8m0-8-8 8" stroke="#000" strokeWidth="1.500" /></svg>
      </button>
    </BrowserTop>
    <BrowserHead>
      <ModelMenu>Model<Caret $s={4} $c="#555" /></ModelMenu>
      <HelpRound aria-label="Browser help">?</HelpRound>
    </BrowserHead>
    <BrowserTools>
      <button aria-label="Filter"><Icon name="filter" /></button>
      <button aria-label="Find"><Icon name="binoc" /></button>
    </BrowserTools>
    <Tree>
      {NODES.map(([level, icon, label, state]) => (
        <Node key={label} $level={level}>
          {level < 2 && (
            <Twisty $root={level === 0} aria-label={`Toggle ${label}`} disabled={!state || state === "none"}>
              {state === "closed" && (
                <svg width="8" height="12" viewBox="0 0 8 12"><path d="M4 3 7 6.500 4 10z" fill="#fff" stroke="#444" /></svg>
              )}
              {state === "open" && (
                <svg width="10" height="12" viewBox="0 0 10 12"><path d="M9 4v6H3z" fill="#222" /></svg>
              )}
            </Twisty>
          )}
          <Icon name={icon} />
          <NodeLabel>{label}</NodeLabel>
        </Node>
      ))}
    </Tree>
  </Browser>
);

/* ---------- graphics window ---------- */

const Workspace = styled.div`
  display: flex;
  flex-direction: column;
  flex: 1;
  min-width: 0;
`;

const Viewport = styled.div`
  position: relative;
  flex: 1;
  min-height: 420px;
  overflow: hidden;
  background: linear-gradient(#2f2f2f, #a2a2a2);
`;

const Canvas = styled.svg`
  position: absolute;
  inset: 0;
  width: 100%;
  height: 100%;
`;

const Overlay = styled.div`
  position: absolute;
  ${(p) => p.$at}
`;

const DocControls = styled(Overlay)`
  display: flex;
  gap: 8px;
`;

const NavBar = styled(Overlay)`
  display: flex;
  flex-direction: column;
  align-items: center;
  width: 34px;
  height: 198px;
  border: 1px solid #4c4c4c;
  border-radius: 4px;
  background: #8f8f8f;
  > button { flex: none; display: flex; align-items: center; justify-content: center; width: 100%; height: 22px; }
`;

const NavEdge = styled.button`
  && { height: 12px; justify-content: flex-end; padding-right: 3px; }
`;

const NavCaret = styled.button`
  && { height: ${(p) => p.$h || 14}px; }
`;

const NavGap = styled.span`
  height: 10px;
`;

const NavRule = styled.hr`
  width: 24px;
  margin: 3px 0;
  border: 0;
  border-top: 1px solid #6a6a6a;
`;

const ShareTile = styled(Overlay)`
  display: flex;
  align-items: center;
  justify-content: center;
  width: 47px;
  height: 46px;
  background: #fbfbfb;
`;

const Part = () => (
  <Canvas viewBox="265 140 1101 579" aria-label="Part7 model">
    <defs>
      <linearGradient id="body">
        <stop offset="0" stopColor="#a85252" />
        <stop offset=".04" stopColor="#a03636" />
        <stop offset=".1" stopColor="#a82a2a" />
        <stop offset=".26" stopColor="#932626" />
        <stop offset=".45" stopColor="#902626" />
        <stop offset=".58" stopColor="#9a2b2b" />
        <stop offset=".68" stopColor="#a63838" />
        <stop offset=".78" stopColor="#a52626" />
        <stop offset=".88" stopColor="#ac2c2c" />
        <stop offset=".95" stopColor="#c04a4a" />
        <stop offset=".98" stopColor="#bf6a6a" />
        <stop offset="1" stopColor="#9c3535" />
      </linearGradient>
      <linearGradient id="bore">
        <stop offset="0" stopColor="#c07070" />
        <stop offset=".1" stopColor="#a84444" />
        <stop offset=".2" stopColor="#b04444" />
        <stop offset=".38" stopColor="#9c2828" />
        <stop offset=".7" stopColor="#8c2424" />
        <stop offset=".9" stopColor="#b03a3a" />
        <stop offset="1" stopColor="#8f3434" />
      </linearGradient>
      <linearGradient id="floor">
        <stop offset="0" stopColor="#ee4c4c" />
        <stop offset=".5" stopColor="#d24040" />
        <stop offset="1" stopColor="#ee4c4c" />
      </linearGradient>
      <linearGradient id="hole">
        <stop offset="0" stopColor="#8c2828" />
        <stop offset=".3" stopColor="#a84040" />
        <stop offset=".5" stopColor="#8e2626" />
        <stop offset=".85" stopColor="#8a2727" />
        <stop offset="1" stopColor="#b46060" />
      </linearGradient>
      <linearGradient id="ring" x1="0" y1="1" x2="1" y2="0">
        <stop offset="0" stopColor="#ff4444" />
        <stop offset=".5" stopColor="#ff4f4f" />
        <stop offset="1" stopColor="#ff5858" />
      </linearGradient>
      <linearGradient id="ribSide" x1="0" y1="0" x2=".4" y2="1">
        <stop offset="0" stopColor="#9c2c2c" />
        <stop offset=".6" stopColor="#8f2a2a" />
        <stop offset="1" stopColor="#7a2020" />
      </linearGradient>
      <linearGradient id="slot">
        <stop offset="0" stopColor="#992828" />
        <stop offset=".6" stopColor="#7c2020" />
        <stop offset="1" stopColor="#701c1c" />
      </linearGradient>
      <linearGradient id="front" x1="0" y1="0" x2="1" y2="1">
        <stop offset="0" stopColor="#9a2828" />
        <stop offset="1" stopColor="#a02929" />
      </linearGradient>
      <radialGradient id="shade">
        <stop offset="0" stopColor="#8a1a1a" stopOpacity=".5" />
        <stop offset="1" stopColor="#8a1a1a" stopOpacity="0" />
      </radialGradient>
      <clipPath id="boreClip"><ellipse cx="903.500" cy="272" rx="83" ry="48" /></clipPath>
      <clipPath id="topClip"><path d="M552 514 774 387v22A130 75 0 0 0 948 476v3L719 610 649 571 701 541 673 526 622 554z" /></clipPath>
    </defs>
    <g stroke="#4a1010" strokeWidth="1" strokeLinejoin="round">
      <path d="M552 514 780 384 860 440 948 479 719 610 649 571 704 541 673 526 622 554z" fill="#ff3838" />
      <g clipPath="url(#topClip)" stroke="none">
        <ellipse cx="758" cy="440" rx="42" ry="30" fill="url(#shade)" opacity=".8" />
        <ellipse cx="870" cy="480" rx="75" ry="20" fill="url(#shade)" opacity=".5" />
      </g>
      <path d="M622 554 674 525V556L649 570V578L622 593z" fill="url(#slot)" />
      <path d="M585 572 619 592 585 610z" fill="#8a2626" />
      <path d="M552 514 622 554V593L585 572V610L552 592z" fill="url(#front)" />
      <path d="M674 528C664 505 684 487 719 486.500 C746 486.500 767 499 767 514 C767 532 740 542 719 541.500 C712 541.500 708 541 703 540.500L674.500 556z" fill="url(#hole)" />
      <path d="M675 538C690 524 735 521 758 532M719 525v9" fill="none" />
      <path d="m719 534-11 6.500c5 1.500 17 1.500 23 0z" fill="#a5a5a5" stroke="none" />
      <path d="M649 571 719 610V688L685 669V629L649 608z" fill="url(#front)" />
      <path d="M719 610 948 479V556L719 688z" fill="#a42828" />
      <path d="M774 272V409A130 75 0 0 0 829 470Q890 492 948 479V555.500A130 75 0 0 0 1033.500 485V272z" fill="url(#body)" stroke="none" />
      <ellipse cx="885" cy="465" rx="60" ry="26" fill="url(#shade)" stroke="none" opacity=".4" />
      <path d="M829 470Q890 492 948 479V555.500A130 75 0 0 0 1033.500 485V272M773.500 272V410" fill="none" />
      <ellipse cx="903.500" cy="272" rx="130" ry="75" fill="url(#ring)" />
      <g clipPath="url(#boreClip)">
        <ellipse cx="903.500" cy="272" rx="83" ry="48" fill="url(#bore)" />
        <ellipse cx="903.500" cy="330" rx="83" ry="48" fill="url(#floor)" />
        <ellipse cx="903.500" cy="327" rx="28" ry="16" fill="#9c2a2a" />
      </g>
      <ellipse cx="903.500" cy="272" rx="83" ry="48" fill="none" />
      <path d="M829 370V470L779 498z" fill="url(#ribSide)" />
      <path d="M796 352Q809 366 829 370L779 498 746 479z" fill="#cc2d2d" />
    </g>
    <path d="M488 343v15l4-3 3 6 3-1-3-6h4z" fill="#fff" stroke="#222" strokeWidth="1" />
  </Canvas>
);

const ViewCube = () => (
  <svg width="60" height="66" viewBox="0 0 60 66" role="img" aria-label="View cube">
    <g stroke="#9a9a9a" strokeWidth=".6">
      <path d="M30 1 59 14 31 28 1 14z" fill="#919191" />
      <path d="M1 14 31 28 30 65 3 47z" fill="#888" />
      <path d="M59 14 31 28 30 65 57 46z" fill="#808080" />
    </g>
    <g fill="#5a5a5a" fontFamily="Liberation Sans, sans-serif" fontSize="8" textAnchor="middle">
      <text transform="translate(31 14) rotate(-18)" y="3">FRONT</text>
      <text transform="translate(15 38) rotate(208)" y="3" fontSize="7">BOTTOM</text>
      <text transform="translate(45 38) rotate(-82)" y="3">RIGHT</text>
    </g>
  </svg>
);

const Triad = () => (
  <svg width="44" height="60" viewBox="0 0 44 60" role="img" aria-label="Axes">
    <path d="M9.500 36V18" stroke="#101070" />
    <path d="m9.500 36 16-9" stroke="#2a8a2a" />
    <path d="m9.500 36 16 9" stroke="#8a2020" />
    <path d="m9.500 11 6 10c-3 2-9 2-12 0z" fill="#0c0cae" />
    <path d="m20 23 10-1-3 9-6 1z" fill="#0d8a1d" />
    <path d="m22 40 9 8-10 1z" fill="#b00f0f" />
    <g fontFamily="Liberation Sans, sans-serif" fontSize="11" fontWeight="700">
      <text x="6" y="11" fill="#4040e0">Z</text>
      <text x="31" y="24" fill="#4cb050">Y</text>
      <text x="31" y="55" fill="#e04040">X</text>
    </g>
  </svg>
);

const NavTools = () => (
  <NavBar $at={css`top: 123px; right: 1px;`}>
    <NavEdge aria-label="Close navigation bar">
      <svg width="8" height="8" viewBox="0 0 8 8"><circle cx="4" cy="4" r="3.500" fill="#777" stroke="#555" /><path d="m2 2 4 4m0-4-4 4" stroke="#ddd" /></svg>
    </NavEdge>
    <NavGap />
    <button aria-label="Steering wheel"><Icon name="navWheel" /></button>
    <NavCaret $h={20} aria-label="Wheel options"><Caret $s={2} /></NavCaret>
    <NavRule />
    <button aria-label="Pan"><Icon name="hand" /></button>
    <button aria-label="Zoom"><Icon name="zoomNav" /></button>
    <NavCaret $h={12} aria-label="Zoom options"><Caret $s={2} /></NavCaret>
    <button aria-label="Orbit"><Icon name="orbit" /></button>
    <NavCaret $h={12} aria-label="Orbit options"><Caret $s={2} /></NavCaret>
    <button aria-label="Look at"><Icon name="look" /></button>
    <NavEdge aria-label="Navigation bar options">
      <svg width="8" height="8" viewBox="0 0 8 8"><circle cx="4" cy="4" r="3.500" fill="#999" stroke="#555" /><path d="M2 3h4L4 6z" fill="#333" /></svg>
    </NavEdge>
  </NavBar>
);

const GraphicsWindow = () => (
  <Viewport>
    <Part />
    <DocControls $at={css`top: 7px; right: 3px;`}>
      <button aria-label="Minimize document"><svg width="12" height="10" viewBox="0 0 12 10"><path d="M1 6h10v2.500H1z" fill="#f4f4f4" /></svg></button>
      <button aria-label="Restore document"><svg width="12" height="10" viewBox="0 0 12 10"><path d="M4 3V1h7v7H9M2 3h7v6H2z" fill="none" stroke="#f4f4f4" strokeWidth="1.600" /></svg></button>
      <button aria-label="Close document"><svg width="10" height="10" viewBox="0 0 10 10"><path d="m1 1 8 8m0-8-8 8" stroke="#f4f4f4" strokeWidth="2" /></svg></button>
    </DocControls>
    <Overlay $at={css`top: 43px; right: 20px;`}><ViewCube /></Overlay>
    <NavTools />
    <Overlay $at={css`bottom: 29px; left: 43px;`}><Triad /></Overlay>
    <ShareTile $at={css`right: 1px; bottom: 31px;`}>
      <svg width="30" height="34" viewBox="0 0 30 34" role="img" aria-label="Share">
        <path d="m15 1 14 8v16l-14 8-14-8V9z" fill="#5aa9e8" />
        <path d="m15 17 14-8v16l-14 8z" fill="#4797dd" />
        <path d="m20 12-10 6 10 4" fill="none" stroke="#fff" strokeWidth="1.500" />
        <circle cx="20" cy="12" r="2.500" fill="#fff" /><circle cx="9.500" cy="18" r="2.500" fill="#fff" /><circle cx="20" cy="22" r="2.500" fill="#fff" />
      </svg>
    </ShareTile>
  </Viewport>
);

const DocBar = styled.nav`
  display: flex;
  align-items: stretch;
  height: 24px;
  background: #5d5d5d;
  color: #dadada;
`;

const DocTools = styled.div`
  display: flex;
  border-right: 1px solid #8a8a8a;
  button { display: flex; align-items: center; justify-content: center; width: 24px; }
`;

const DocTab = styled.button`
  display: flex;
  align-items: center;
  gap: 7px;
  padding: 1px 8px 0;
  ${(p) => p.$active && css`background: #f5f5f5; color: #444;`}
`;

const DocTabs = () => (
  <DocBar>
    <DocTools>
      <button aria-label="Cascade"><Icon name="cascade" /></button>
      <button aria-label="Tile"><Icon name="tile" /></button>
      <button aria-label="Tile horizontally"><Icon name="hsplit" /></button>
      <button aria-label="Tile vertically"><Icon name="vsplit" /></button>
      <button aria-label="Document list"><Icon name="upTri" /></button>
    </DocTools>
    <DocTab>My Home</DocTab>
    <DocTab>Bài tập dựng khố...idw</DocTab>
    <DocTab>Bài 11.ipt</DocTab>
    <DocTab $active>Part7<Icon name="tabX" /></DocTab>
  </DocBar>
);

/* ---------- status bar ---------- */

const Status = styled.footer`
  display: flex;
  align-items: center;
  height: 23px;
  padding: 2px 0 0 1px;
  background: #f5f5f5;
  color: #222;
`;

const StatusText = styled.span`
  flex: 1;
`;

const StatusCell = styled.span`
  width: 40px;
  height: 20px;
  padding: 2px 0 0 9px;
  border-left: 1px solid #d5d5d5;
`;

const Edge = styled.div`
  height: 2px;
  background: linear-gradient(90deg, #2c2c2c 245px, #6c6c6c 245px, #6c6c6c 406px, #2c2c2c 406px);
`;

export default function App() {
  return (
    <Shell>
      <GlobalStyle />
      <Title />
      <RibbonTabs />
      <RibbonPanels />
      <Main>
        <ModelBrowser />
        <Workspace>
          <GraphicsWindow />
          <DocTabs />
        </Workspace>
      </Main>
      <Status>
        <StatusText>Ready</StatusText>
        <StatusCell>1</StatusCell>
        <StatusCell>18</StatusCell>
      </Status>
      <Edge />
    </Shell>
  );
}
